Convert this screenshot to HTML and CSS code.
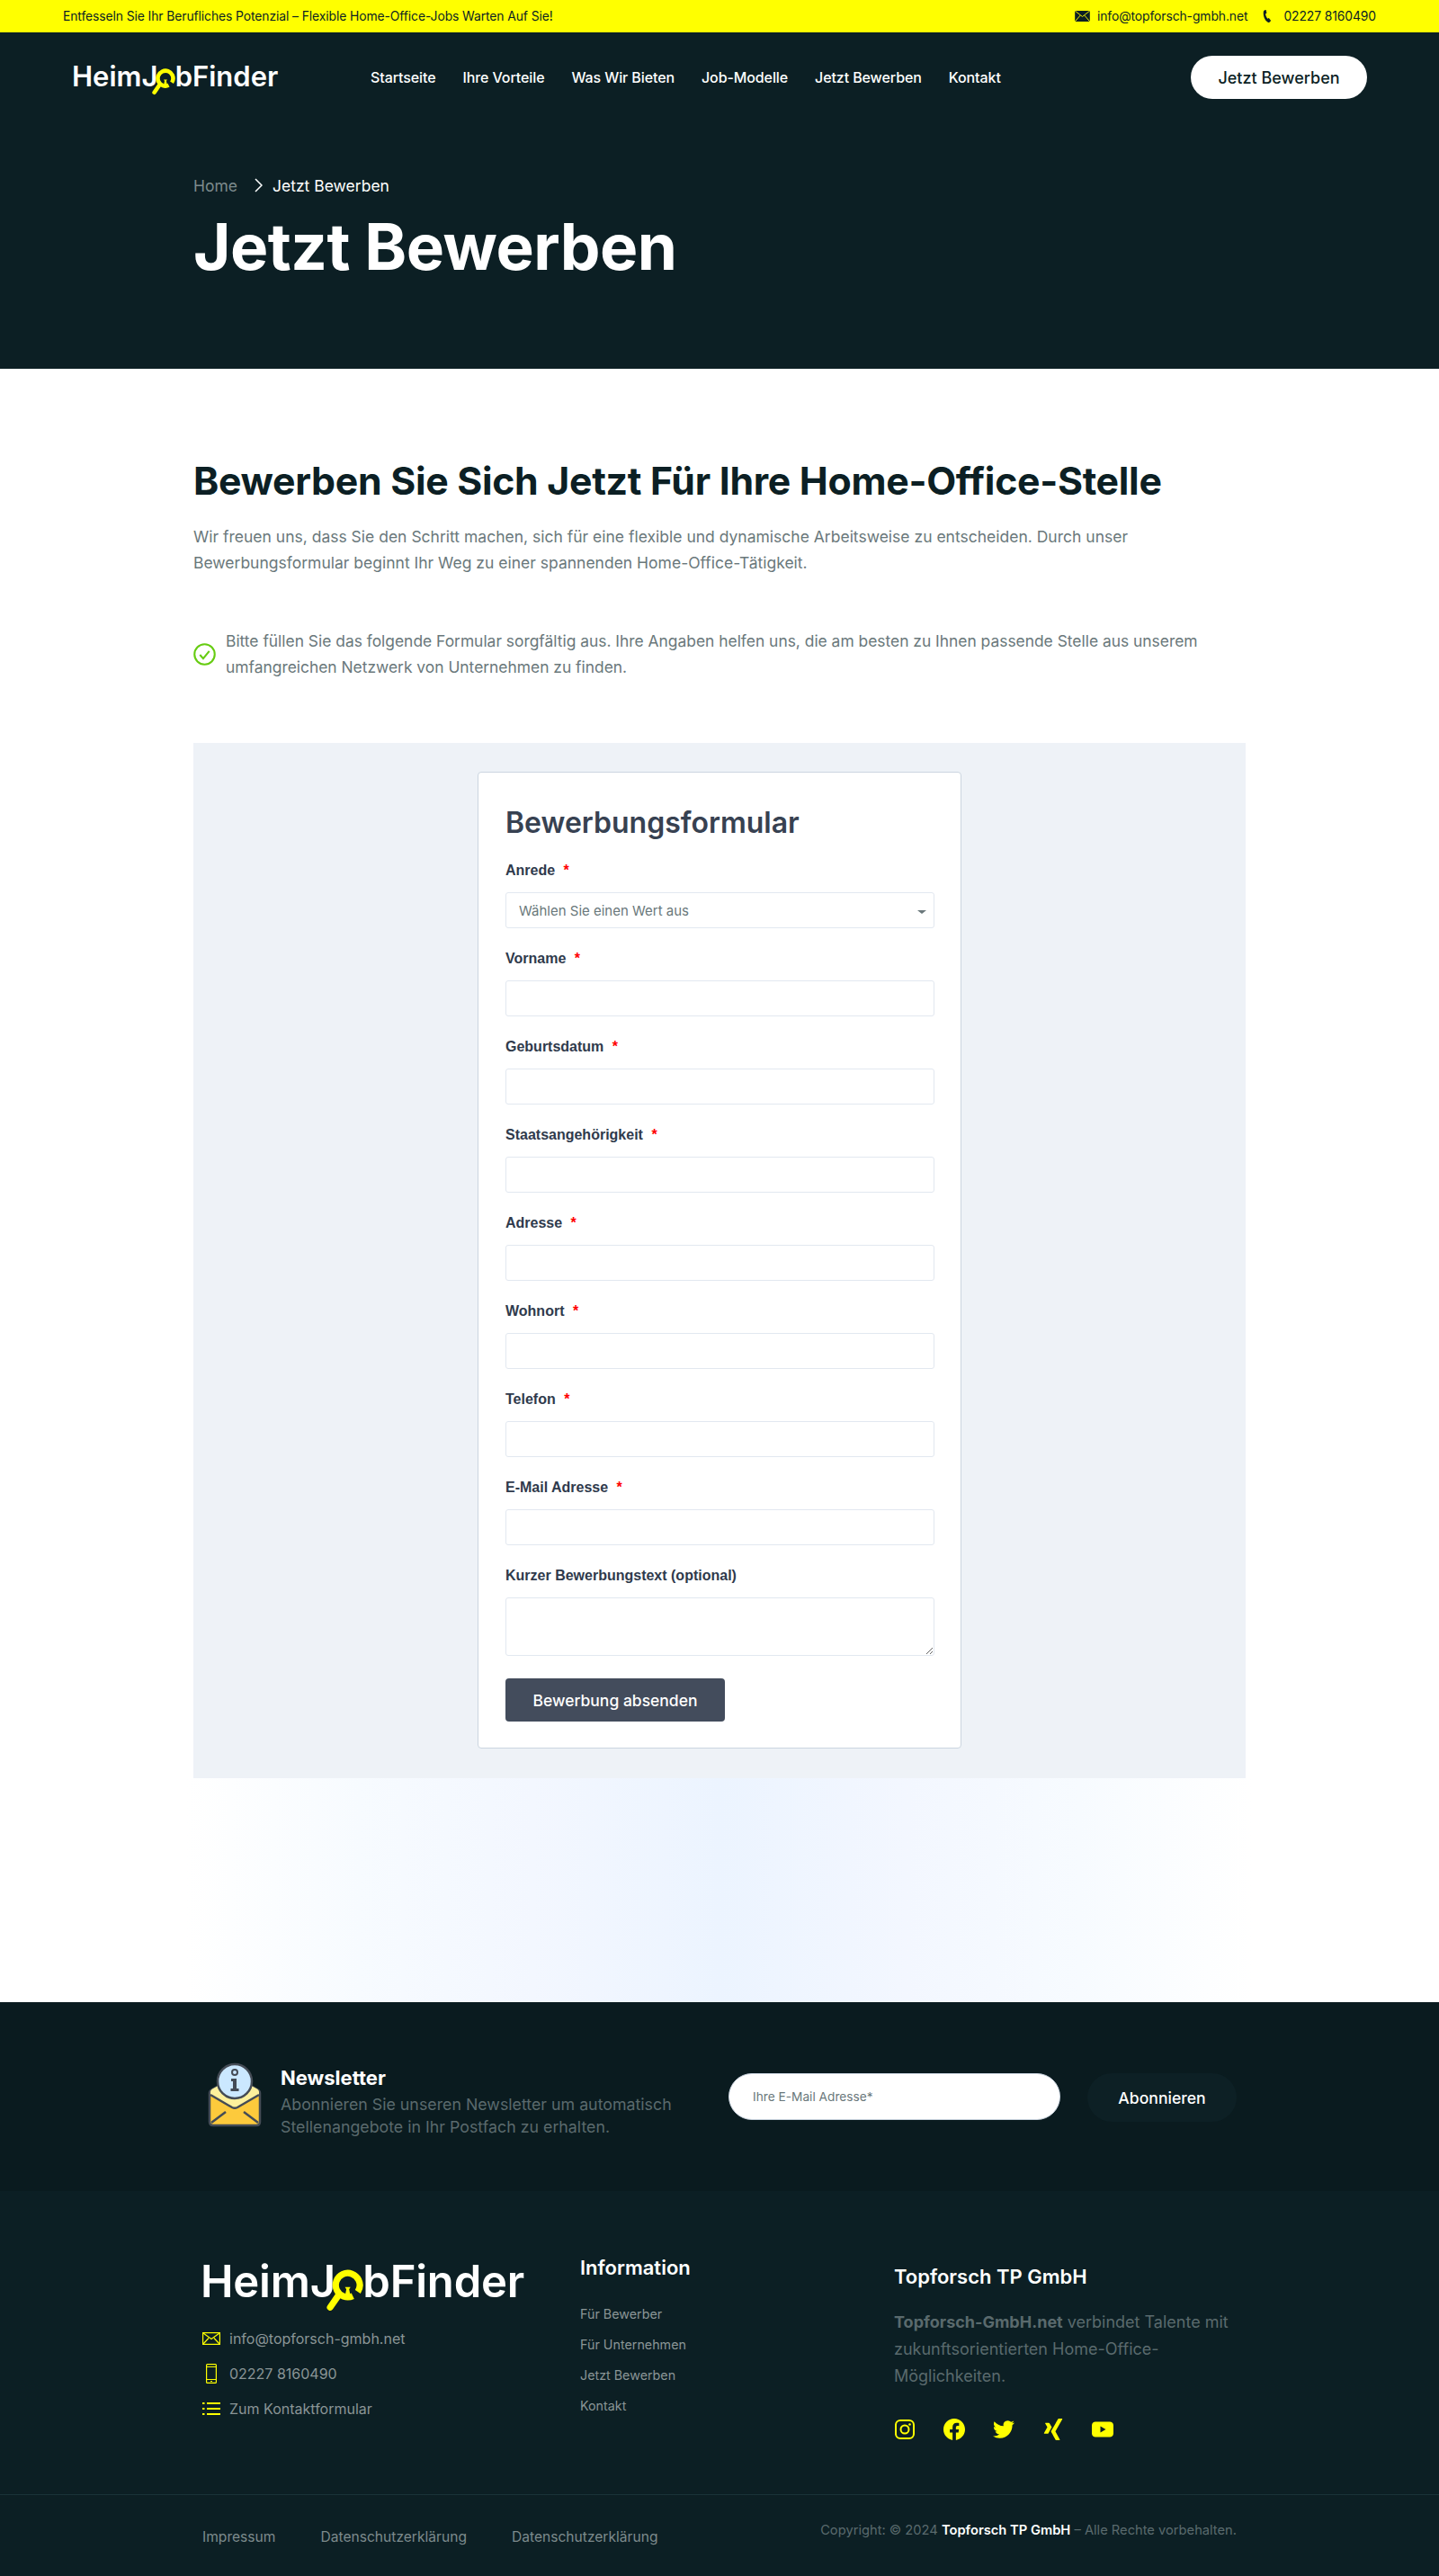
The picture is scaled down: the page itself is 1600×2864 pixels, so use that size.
FILE: index.html
```html
<!DOCTYPE html>
<html lang="de">
<head>
<meta charset="UTF-8">
<meta name="viewport" content="width=device-width, initial-scale=1.0">
<title>Jetzt Bewerben - HeimJobFinder</title>
<link rel="stylesheet" href="styles.css">
</head>
<body>

<div class="topbar">
  <span>Entfesseln Sie Ihr Berufliches Potenzial – Flexible Home-Office-Jobs Warten Auf Sie!</span>
  <div class="topbar-contact">
    <svg class="top-mail" viewBox="0 0 18 13"><rect width="18" height="13" fill="#0c1f24"/><path d="M0 0l9 7 9-7M0 13l6.500-7.500M18 13l-6.500-7.500" fill="none" stroke="#ffff00"/></svg>
    <span>info@topforsch-gmbh.net</span>
    <svg class="top-phone" viewBox="3 3 14 18"><path d="M6 3.200l2.300-.2 1 4.300-1.600 1.200c.3 2.300 1.200 4.500 2.700 6.200l1.800-.9 2.800 3.700-1.700 1.600c-.7.600-1.600.8-2.400.4-4.300-2.500-6.600-8.900-5.900-14.100.1-1.100.9-2 2-2.200z" fill="#0c1f24"/></svg>
    <span>02227 8160490</span>
  </div>
</div>

<header class="site-header">
  <div class="nav-row">
    <a class="logo logo-small" href="#">
      <span>HeimJ</span>
      <svg class="logo-o" viewBox="0 0 40 46"><circle cx="23" cy="17" r="13" fill="none" stroke="#ffff00" stroke-width="7" stroke-dasharray="74 8" transform="rotate(65 23 17)"/><path d="M13 28L4 41" stroke="#ffff00" stroke-width="7" stroke-linecap="round"/><path d="M20 19h6l-1.500 2.500 1 5-2.500 2.500-2.500-2.500 1-5z" fill="#ffff00"/></svg>
      <span>bFinder</span>
    </a>
    <nav class="main-nav">
      <a href="#">Startseite</a>
      <a href="#">Ihre Vorteile</a>
      <a href="#">Was Wir Bieten</a>
      <a href="#">Job-Modelle</a>
      <a href="#">Jetzt Bewerben</a>
      <a href="#">Kontakt</a>
    </nav>
    <a class="header-btn" href="#">Jetzt Bewerben</a>
  </div>
  <div class="container page-title">
    <div class="breadcrumb">
      <a href="#">Home</a>
      <svg viewBox="0 0 10 16"><path d="M2 1l7 7-7 7" fill="none" stroke="#fff" stroke-width="1.500"/></svg>
      <span>Jetzt Bewerben</span>
    </div>
    <h1>Jetzt Bewerben</h1>
  </div>
</header>

<main>
  <div class="container intro">
    <h2>Bewerben Sie Sich Jetzt Für Ihre Home-Office-Stelle</h2>
    <p class="lead">Wir freuen uns, dass Sie den Schritt machen, sich für eine flexible und dynamische Arbeitsweise zu entscheiden. Durch unser Bewerbungsformular beginnt Ihr Weg zu einer spannenden Home-Office-Tätigkeit.</p>
    <div class="check-item">
      <svg viewBox="0 0 24 24"><circle cx="12" cy="12" r="10.800" fill="none" stroke="#66cc11" stroke-width="2"/><path d="M7 12.500l3.500 4 6.500-8" fill="none" stroke="#66cc11" stroke-width="2"/></svg>
      <p>Bitte füllen Sie das folgende Formular sorgfältig aus. Ihre Angaben helfen uns, die am besten zu Ihnen passende Stelle aus unserem umfangreichen Netzwerk von Unternehmen zu finden.</p>
    </div>
  </div>

  <section class="container form-section">
    <form class="apply-form">
      <h3>Bewerbungsformular</h3>

      <div class="field">
        <label for="anrede">Anrede <i>*</i></label>
        <div class="select-wrap">
          <select id="anrede">
            <option>Wählen Sie einen Wert aus</option>
            <option>Frau</option>
            <option>Herr</option>
          </select>
        </div>
      </div>
      <div class="field">
        <label for="vorname">Vorname <i>*</i></label>
        <input type="text" id="vorname">
      </div>
      <div class="field">
        <label for="geburtsdatum">Geburtsdatum <i>*</i></label>
        <input type="text" id="geburtsdatum">
      </div>
      <div class="field">
        <label for="staat">Staatsangehörigkeit <i>*</i></label>
        <input type="text" id="staat">
      </div>
      <div class="field">
        <label for="adresse">Adresse <i>*</i></label>
        <input type="text" id="adresse">
      </div>
      <div class="field">
        <label for="wohnort">Wohnort <i>*</i></label>
        <input type="text" id="wohnort">
      </div>
      <div class="field">
        <label for="telefon">Telefon <i>*</i></label>
        <input type="text" id="telefon">
      </div>
      <div class="field">
        <label for="email">E-Mail Adresse <i>*</i></label>
        <input type="text" id="email">
      </div>
      <div class="field">
        <label for="text">Kurzer Bewerbungstext (optional)</label>
        <textarea id="text"></textarea>
      </div>

      <button type="button" class="submit-btn">Bewerbung absenden</button>
    </form>
  </section>

  <div class="form-spacer"></div>
</main>

<section class="newsletter">
  <div class="container newsletter-row">
    <svg class="news-icon" viewBox="0 0 60 72">
      <path d="M2 34c0-2 1-3 3-4l25-14 25 14c2 1 3 2 3 4v32c0 3-2 4-4 4H6c-2 0-4-1-4-4z" fill="#fdca3c" stroke="#444b55" stroke-width="2.500"/>
      <path d="M3 36l24 14c2 1 4 1 6 0l24-14v-3c0-2-1-3-3-4L30 16 6 29c-2 1-3 2-3 4z" fill="#fdf09c"/>
      <path d="M3 36l24 14c2 1 4 1 6 0l24-14M4 67l16-12M56 67L40 55" fill="none" stroke="#444b55" stroke-width="2.500"/>
      <circle cx="30" cy="21" r="19" fill="#cbe8ff" stroke="#444b55" stroke-width="2.500"/>
      <circle cx="30" cy="11" r="3" fill="none" stroke="#444b55" stroke-width="2"/>
      <path d="M26 18h6v11h2.500v3h-9v-3H28v-8h-2z" fill="#444b55"/>
    </svg>
    <div class="news-copy">
      <h4>Newsletter</h4>
      <p>Abonnieren Sie unseren Newsletter um automatisch Stellenangebote in Ihr Postfach zu erhalten.</p>
    </div>
    <form class="news-form">
      <input type="email" placeholder="Ihre E-Mail Adresse*">
      <button type="button">Abonnieren</button>
    </form>
  </div>
</section>

<footer class="site-footer">
  <div class="container footer-cols">
    <div class="footer-col-brand">
      <a class="logo logo-big" href="#">
        <span>HeimJ</span>
        <svg class="logo-o" viewBox="0 0 40 46"><circle cx="23" cy="17" r="13" fill="none" stroke="#ffff00" stroke-width="7" stroke-dasharray="74 8" transform="rotate(65 23 17)"/><path d="M13 28L4 41" stroke="#ffff00" stroke-width="7" stroke-linecap="round"/><path d="M20 19h6l-1.500 2.500 1 5-2.500 2.500-2.500-2.500 1-5z" fill="#ffff00"/></svg>
        <span>bFinder</span>
      </a>
      <ul class="footer-contact">
        <li>
          <svg viewBox="0 0 20 14"><rect x=".6" y=".6" width="18.800" height="12.800" fill="none" stroke="#ffff00" stroke-width="1.200"/><path d="M1 1l9 6.500L19 1M1 13l6-6.500M19 13l-6-6.500" fill="none" stroke="#ffff00" stroke-width="1.200"/></svg>
          <span>info@topforsch-gmbh.net</span>
        </li>
        <li>
          <svg viewBox="0 0 20 22"><rect x="4.600" y=".6" width="10.800" height="20.800" rx="1" fill="none" stroke="#ffff00" stroke-width="1.200"/><path d="M4.600 17.500h10.800M4.600 3.500h10.800M9 19.500h2" fill="none" stroke="#ffff00" stroke-width="1.200"/></svg>
          <span>02227 8160490</span>
        </li>
        <li>
          <svg viewBox="0 0 20 16"><path d="M5 2h15M5 8h15M5 14h15" stroke="#ffff00" stroke-width="2"/><path d="M0 2h2.500M0 8h2.500M0 14h2.500" stroke="#ffff00" stroke-width="2"/></svg>
          <span>Zum Kontaktformular</span>
        </li>
      </ul>
    </div>

    <div class="footer-col-links">
      <h4>Information</h4>
      <a href="#">Für Bewerber</a>
      <a href="#">Für Unternehmen</a>
      <a href="#">Jetzt Bewerben</a>
      <a href="#">Kontakt</a>
    </div>

    <div class="footer-col-company">
      <h4>Topforsch TP GmbH</h4>
      <p><b>Topforsch-GmbH.net</b> verbindet Talente mit zukunftsorientierten Home-Office-Möglichkeiten.</p>
      <div class="social">
        <a href="#"><svg viewBox="0 0 24 24"><rect x="2" y="2" width="20" height="20" rx="5" fill="none" stroke="#ffff00" stroke-width="2"/><circle cx="12" cy="12" r="4.500" fill="none" stroke="#ffff00" stroke-width="2"/><circle cx="17.500" cy="6.500" r="1.300" fill="#ffff00"/></svg></a>
        <a href="#"><svg viewBox="0 0 24 24"><path fill="#ffff00" d="M24 12.073c0-6.627-5.373-12-12-12s-12 5.373-12 12c0 5.990 4.388 10.954 10.125 11.854v-8.385H7.078v-3.470h3.047V9.430c0-3.007 1.792-4.669 4.533-4.669 1.312 0 2.686.235 2.686.235v2.953H15.830c-1.491 0-1.956.925-1.956 1.874v2.250h3.328l-.532 3.470h-2.796v8.385C19.612 23.027 24 18.062 24 12.073z"/></svg></a>
        <a href="#"><svg viewBox="0 0 24 24"><path fill="#ffff00" d="M23.953 4.570a10 10 0 01-2.825.775 4.958 4.958 0 002.163-2.723c-.951.555-2.005.959-3.127 1.184a4.920 4.920 0 00-8.384 4.482C7.690 8.095 4.067 6.130 1.640 3.162a4.822 4.822 0 00-.666 2.475c0 1.710.870 3.213 2.188 4.096a4.904 4.904 0 01-2.228-.616v.060a4.923 4.923 0 003.946 4.827 4.996 4.996 0 01-2.212.085 4.936 4.936 0 004.604 3.417 9.867 9.867 0 01-6.102 2.105c-.390 0-.779-.023-1.170-.067a13.995 13.995 0 007.557 2.209c9.053 0 13.998-7.496 13.998-13.985 0-.210 0-.420-.015-.630A9.935 9.935 0 0024 4.590z"/></svg></a>
        <a href="#"><svg viewBox="0 0 24 24"><path fill="#ffff00" d="M18.188 0c-.517 0-.741.325-.927.660 0 0-7.455 13.224-7.702 13.657.015.024 4.919 9.023 4.919 9.023.170.308.436.660.967.660h3.454c.211 0 .375-.078.463-.220.089-.151.089-.346-.009-.536l-4.879-8.916c-.004-.006-.004-.016 0-.022L22.139.756c.095-.191.097-.387.006-.535C22.056.078 21.894 0 21.686 0h-3.498zM3.648 4.740c-.211 0-.385.074-.473.216-.090.149-.078.339.020.531l2.340 4.050c.004.010.004.016 0 .021L1.860 16.051c-.099.188-.093.381 0 .529.085.142.239.234.450.234h3.461c.518 0 .766-.348.945-.667l3.734-6.609-2.378-4.155c-.172-.315-.434-.659-.962-.659H3.648v.016z"/></svg></a>
        <a href="#"><svg viewBox="0 0 24 24"><path fill="#ffff00" fill-rule="evenodd" d="M4 3.500h16c2 0 4 1.500 4 4v9c0 2.500-2 4-4 4H4c-2 0-4-1.500-4-4v-9c0-2.500 2-4 4-4zM9.500 8.500v7l6-3.500z"/></svg></a>
      </div>
    </div>
  </div>

  <div class="footer-bottom">
    <div class="container footer-bottom-row">
      <div class="legal-links">
        <a href="#">Impressum</a>
        <a href="#">Datenschutzerklärung</a>
        <a href="#">Datenschutzerklärung</a>
      </div>
      <p class="copyright">Copyright: © 2024 <b>Topforsch TP GmbH</b> – Alle Rechte vorbehalten.</p>
    </div>
  </div>
</footer>

</body>
</html>
```

FILE: styles.css
```css
* {
  box-sizing: border-box;
}
body {
  margin: 0;
  font-family: Inter, "Noto Sans", sans-serif;
  color: #0c1f24;
  background: #fff;
}
a {
  color: inherit;
  text-decoration: none;
}
h1, h2, h3, h4, p, ul {
  margin: 0;
  padding: 0;
}
.container {
  width: 1170px;
  margin: 0 auto;
}

/* top bar */
.topbar {
  height: 36px;
  padding: 0 70px;
  background: #ffff00;
  display: flex;
  align-items: center;
  justify-content: space-between;
  font-size: 13.900px;
  letter-spacing: -0.1px;
  color: #0c1f24;
}
.topbar-contact {
  display: flex;
  align-items: center;
}
.top-mail {
  width: 17px;
  height: 12px;
  margin-right: 8px;
}
.top-phone {
  width: 12px;
  height: 15px;
  margin: 0 12px 0 16px;
}

/* header */
.site-header {
  height: 374px;
  padding-top: 26px;
  background: #0c1f24;
  color: #fff;
}
.nav-row {
  display: flex;
  align-items: center;
  height: 48px;
  padding: 0 80px;
}
.logo {
  display: flex;
  align-items: flex-start;
  font-weight: 600;
  color: #fff;
}
.logo-small {
  width: 332px;
  font-size: 31px;
  line-height: 38px;
  letter-spacing: 0;
}
.logo-big {
  margin-left: -2px;
  font-size: 49px;
  line-height: 58px;
  letter-spacing: -0.2px;
}
.logo-o {
  width: 0.84em;
  height: 0.97em;
  margin: 0.3em -0.02em 0 -0.2em;
  flex: none;
}
.main-nav {
  display: flex;
  gap: 30px;
  font-size: 16px;
  font-weight: 500;
  letter-spacing: -0.1px;
}
.header-btn {
  margin-left: auto;
  width: 196px;
  height: 48px;
  border-radius: 24px;
  background: #fff;
  color: #0c1f24;
  font-size: 18px;
  font-weight: 500;
  display: flex;
  align-items: center;
  justify-content: center;
}
.page-title {
  padding-top: 84px;
}
.breadcrumb {
  display: flex;
  align-items: center;
  height: 24px;
  font-size: 17.500px;
}
.breadcrumb a {
  color: #7c8a8c;
}
.breadcrumb svg {
  width: 10px;
  height: 16px;
  margin: 0 11px 0 18px;
}
h1 {
  margin-top: 14px;
  font-size: 71px;
  line-height: 84px;
  font-weight: 700;
  letter-spacing: -0.5px;
}

/* intro */
.intro {
  padding-top: 100px;
}
h2 {
  font-size: 42.800px;
  line-height: 50px;
  font-weight: 700;
  letter-spacing: -0.3px;
}
.lead {
  margin-top: 22px;
  font-size: 17.500px;
  line-height: 29px;
  color: #6a787b;
}
.check-item {
  display: flex;
  align-items: center;
  gap: 11px;
  margin-top: 58px;
  font-size: 17.400px;
  line-height: 29px;
  color: #6a787b;
}
.check-item svg {
  width: 25px;
  height: 25px;
  flex: none;
}

/* form */
.form-section {
  margin-top: 70px;
  padding: 32px 0 33px;
  background: #eef2f7;
}
.apply-form {
  width: 538px;
  margin: 0 auto;
  padding: 34px 29px 29px 30px;
  background: #fff;
  border: 1px solid #cbd5e0;
  border-radius: 4px;
}
.apply-form h3 {
  font-size: 32px;
  line-height: 44px;
  font-weight: 600;
  color: #374151;
  margin-bottom: 19px;
}
.field {
  margin-bottom: 22px;
}
.field:last-of-type {
  margin-bottom: 25px;
}
.field label {
  display: block;
  height: 24px;
  margin-bottom: 12px;
  font-family: "Liberation Sans", Arial, sans-serif;
  font-weight: 700;
  font-size: 16px;
  line-height: 24px;
  color: #2f3a4c;
}
.field label i {
  font-style: normal;
  color: #f00;
  margin-left: 5px;
}
.field input,
.field select,
.field textarea {
  display: block;
  width: 100%;
  height: 40px;
  background: #fff;
  border: 1px solid #e2e8f0;
  border-radius: 3px;
  font-family: inherit;
}
.field textarea {
  height: 65px;
}
.select-wrap {
  position: relative;
}
.select-wrap select {
  appearance: none;
  padding: 0 14px;
  font-size: 15px;
  color: #6a787b;
}
.select-wrap::after {
  content: "";
  position: absolute;
  right: 9px;
  top: 20px;
  border-left: 5px solid transparent;
  border-right: 5px solid transparent;
  border-top: 4px solid #6a787b;
}
.submit-btn {
  display: block;
  width: 244px;
  height: 48px;
  border: 0;
  border-radius: 4px;
  background: #434c5c;
  color: #fff;
  font-family: inherit;
  font-size: 17.500px;
  font-weight: 500;
}
.form-spacer {
  height: 249px;
  background: linear-gradient(90deg, #fff 13%, #f7fbff 25%, #f3f7ff 37%, #ecf4ff 50%, #f3f7ff 63%, #f7fbff 75%, #fff 87%);
}

/* newsletter */
.newsletter {
  height: 210px;
  background: #0a1b1f;
  color: #fff;
}
.newsletter-row {
  display: flex;
  padding-top: 67px;
}
.news-icon {
  width: 60px;
  height: 72px;
  margin: 0 21px 0 16px;
  flex: none;
}
.news-copy {
  width: 450px;
  padding-top: 1px;
}
.news-copy h4 {
  font-size: 22px;
  line-height: 33px;
  font-weight: 700;
}
.news-copy p {
  font-size: 17.800px;
  line-height: 25px;
  color: #5a6a6d;
}
.news-form {
  display: flex;
  gap: 30px;
  margin: 12px 0 0 48px;
}
.news-form input {
  width: 369px;
  height: 52px;
  padding: 0 26px;
  border: 1px solid #cbd5e0;
  border-radius: 26px;
  font-family: inherit;
  font-size: 13.700px;
}
.news-form input::placeholder {
  color: #6a787b;
}
.news-form button {
  width: 166px;
  height: 54px;
  border: 0;
  border-radius: 27px;
  background: #0d2025;
  color: #fff;
  font-family: inherit;
  font-size: 17.600px;
  font-weight: 500;
}

/* footer */
.site-footer {
  height: 428px;
  background: #0c1f24;
  color: #8a9596;
}
.footer-cols {
  display: flex;
  height: 337px;
  padding: 72px 0 0 10px;
}
.footer-col-brand {
  width: 420px;
}
.footer-contact {
  list-style: none;
  margin-top: 10px;
  font-size: 16px;
}
.footer-contact li {
  display: flex;
  align-items: center;
  height: 39px;
}
.footer-contact svg {
  width: 20px;
  height: 22px;
  margin-right: 10px;
}
.footer-col-links {
  width: 349px;
  display: flex;
  flex-direction: column;
  font-size: 14.300px;
}
.footer-col-links h4 {
  color: #fff;
  font-size: 22px;
  line-height: 30px;
  font-weight: 600;
  margin: -2px 0 20px;
}
.footer-col-links a {
  line-height: 34px;
}
.footer-col-company {
  flex: 1;
  padding-top: 8px;
}
.footer-col-company h4 {
  color: #fff;
  font-size: 22px;
  line-height: 30px;
  font-weight: 600;
  margin-bottom: 21px;
}
.footer-col-company p {
  width: 390px;
  font-size: 18px;
  line-height: 30px;
  color: #5a6a6d;
}
.social {
  display: flex;
  gap: 31px;
  margin-top: 32px;
}
.social a {
  display: block;
  width: 24px;
  height: 24px;
}
.social svg {
  display: block;
  width: 24px;
  height: 24px;
}
.footer-bottom {
  border-top: 1px solid #1a3238;
}
.footer-bottom-row {
  display: flex;
  justify-content: space-between;
  padding: 0 10px;
}
.legal-links {
  display: flex;
  gap: 50px;
  padding-top: 35px;
  font-size: 15.600px;
  line-height: 24px;
  color: #7c8a8c;
}
.copyright {
  padding-top: 27px;
  font-size: 14.700px;
  line-height: 24px;
  color: #5a6a6d;
}
.copyright b {
  color: #fff;
  font-weight: 600;
}
```
